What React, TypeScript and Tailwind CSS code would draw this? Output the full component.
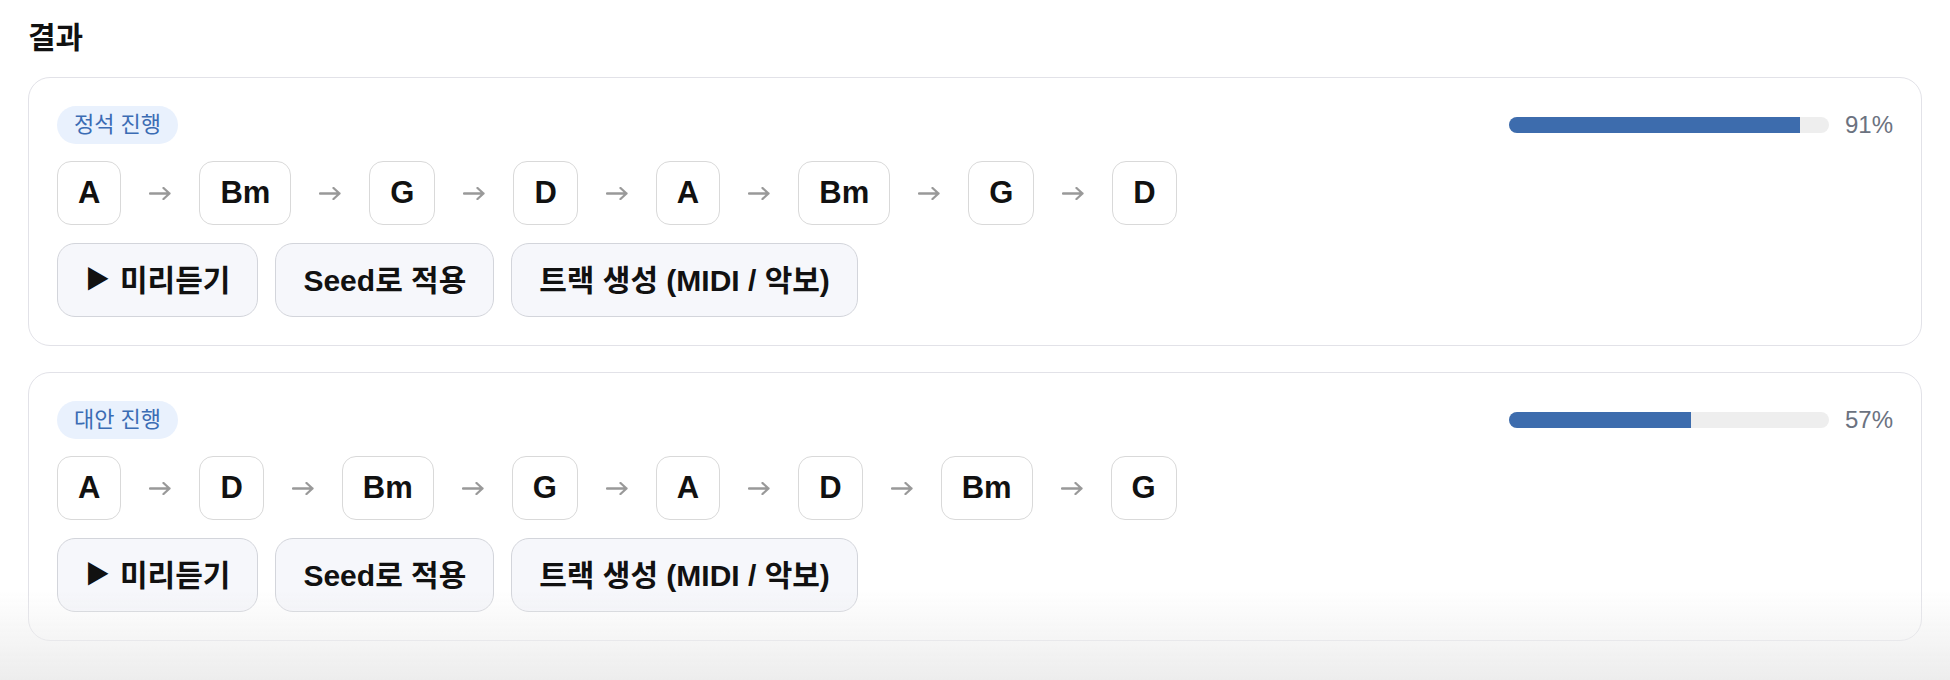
interface Progression {
	label: string;
	chords: string[];
	score: number;
}

const results: Progression[] = [
	{ label: "정석 진행", chords: ["A", "Bm", "G", "D", "A", "Bm", "G", "D"], score: 91 },
	{ label: "대안 진행", chords: ["A", "D", "Bm", "G", "A", "D", "Bm", "G"], score: 57 },
];

function Arrow() {
	return (
		<svg width="22" height="13" viewBox="0 0 22 13" fill="none" className="shrink-0">
			<path d="M1 6.5H20.5M14.5 1L20.5 6.5L14.5 12" stroke="#999999" strokeWidth="2.3" strokeLinecap="round" strokeLinejoin="round" />
		</svg>
	);
}

function ActionButton({ children }: { children: React.ReactNode }) {
	return (
		<button className="flex h-[74px] items-center rounded-[18px] border border-[#d3d5db] bg-[#f6f7fb] px-[27px] text-[30px] font-bold text-[#111]">
			{children}
		</button>
	);
}

function ResultCard(props: Progression) {
	return (
		<div className="rounded-[22px] border border-[#e2e2e8] bg-white p-7">
			<div className="flex items-center justify-between">
				<span className="rounded-full bg-[#e9f1fd] px-[17px] py-[5px] text-[22px] leading-[28px] text-[#3b6cb4]">
					{props.label}
				</span>
				<div className="flex items-center gap-4">
					<div className="h-4 w-[320px] overflow-hidden rounded-full bg-[#eeeeee]">
						<div className="h-full bg-[#3d6cad]" style={{ width: `${props.score}%` }} />
					</div>
					<span className="text-[24px] leading-8 text-[#6b7280]">{props.score}%</span>
				</div>
			</div>

			<div className="mt-[17px] flex items-center gap-7">
				{props.chords.map((c, i) => (
					<div key={i} className="flex items-center gap-7">
						{i > 0 && <Arrow />}
						<div className="flex h-16 items-center rounded-[14px] border border-[#d9d9d9] bg-white px-5 text-[31px] font-bold text-[#111]">
							{c}
						</div>
					</div>
				))}
			</div>

			<div className="mt-[18px] flex gap-[17px]">
				<ActionButton>
					<span className="mr-[10px] text-[25px]">▶</span>미리듣기
				</ActionButton>
				<ActionButton>Seed로 적용</ActionButton>
				<ActionButton>트랙 생성 (MIDI / 악보)</ActionButton>
			</div>
		</div>
	);
}

export default function App() {
	return (
		<div className="relative min-h-[680px] bg-white px-7 pt-[17px] font-['Liberation_Sans','Noto_Sans_CJK_KR',sans-serif]">
			<h2 className="mb-[19px] text-[30px] font-bold leading-[41px] text-[#111]">결과</h2>
			<div className="flex flex-col gap-[26px]">
				{results.map((r) => (
					<ResultCard key={r.label} {...r} />
				))}
			</div>
			<div className="pointer-events-none fixed inset-x-0 bottom-0 h-[90px] bg-linear-to-b from-white/0 to-[#ededed]" />
		</div>
	);
}
